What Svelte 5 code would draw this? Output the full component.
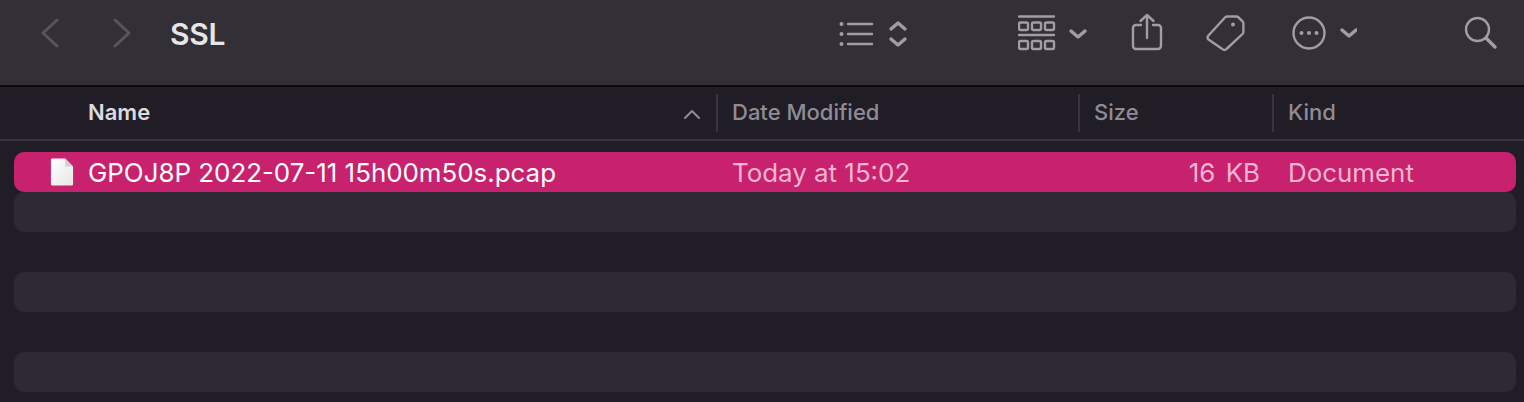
<script>
  const cols = [
    { label: 'Date Modified', cls: 'date' },
    { label: 'Size', cls: 'size' },
    { label: 'Kind', cls: 'kind' }
  ];
  const stripes = [1, 2, 3, 4, 5];
</script>

<div class="window">
  <header class="toolbar">
    <div class="nav">
      <svg width="22" height="30" viewBox="0 0 22 30"><path d="M18 2 4 15l14 13" /></svg>
      <svg width="22" height="30" viewBox="0 0 22 30"><path d="M4 2l14 13L4 28" /></svg>
    </div>
    <h1>SSL</h1>
    <div class="tools">
      <svg class="t-list" width="70" height="30" viewBox="0 0 70 30">
        <circle cx="2.500" cy="5" r="2" class="fill" /><circle cx="2.500" cy="15" r="2" class="fill" /><circle cx="2.500" cy="25" r="2" class="fill" />
        <path d="M9 5h24M9 15h24M9 25h24" />
        <path d="M52 10l7-6 7 6M52 20l7 6 7-6" class="bold" />
      </svg>
      <svg class="t-group" width="72" height="36" viewBox="0 0 72 36">
        <path d="M1 1.500h35M1 20h35" />
        <rect x="1" y="7.500" width="9" height="7.500" rx="1.500" /><rect x="14" y="7.500" width="9" height="7.500" rx="1.500" /><rect x="27" y="7.500" width="9" height="7.500" rx="1.500" />
        <rect x="1" y="26" width="9" height="8" rx="1.500" /><rect x="14" y="26" width="9" height="8" rx="1.500" /><rect x="27" y="26" width="9" height="8" rx="1.500" />
        <path d="M53 16l7 6 7-6" class="bold" />
      </svg>
      <svg class="t-share" width="32" height="38" viewBox="0 0 32 38">
        <path d="M10 12H5a3 3 0 0 0-3 3v18a3 3 0 0 0 3 3h22a3 3 0 0 0 3-3V15a3 3 0 0 0-3-3h-5" />
        <path d="M16 25V2M9.500 8 16 2l6.500 6" />
      </svg>
      <svg class="t-tag" width="40" height="38" viewBox="0 0 40 38">
        <path d="M2.500 21.500 19 3.500a3 3 0 0 1 2-1h9.500a3 3 0 0 1 2 .8l4 4a3 3 0 0 1 .9 2.200v8.500a3 3 0 0 1-.9 2L20.500 35a3 3 0 0 1-4.200 0L2.500 25.600a3 3 0 0 1 0-4.100z" />
        <circle cx="27" cy="10.500" r="2" class="fill" />
      </svg>
      <svg class="t-more" width="66" height="36" viewBox="0 0 66 36">
        <circle cx="18" cy="18" r="15.500" />
        <circle cx="10.500" cy="18" r="2" class="fill" /><circle cx="18" cy="18" r="2" class="fill" /><circle cx="25.500" cy="18" r="2" class="fill" />
        <path d="M51 15l7 6 7-6" class="bold" />
      </svg>
      <svg class="t-search" width="34" height="34" viewBox="0 0 34 34">
        <circle cx="13.500" cy="13.500" r="11.500" />
        <path d="M22 22l9 9" class="bold" />
      </svg>
    </div>
  </header>

  <div class="head">
    <div class="h-name">
      <span>Name</span>
      <svg width="16" height="10" viewBox="0 0 16 10"><path d="M1 9l7-7 7 7" /></svg>
    </div>
    {#each cols as col}
      <div class="h-col {col.cls}">{col.label}</div>
    {/each}
  </div>

  <main class="rows">
    <div class="row selected">
      <svg class="doc" width="24" height="28" viewBox="0 0 26 30" preserveAspectRatio="none">
        <defs><linearGradient id="paper" x1="0" y1="0" x2="1" y2="1"><stop offset="0" stop-color="#ffffff" /><stop offset="1" stop-color="#e6e6e6" /></linearGradient></defs>
        <path class="sheet" d="M2 0.500h14.500L25 9v19a1.500 1.500 0 0 1-1.500 1.500h-21A1.500 1.500 0 0 1 1 28V2A1.500 1.500 0 0 1 2 .5z" />
        <path class="fold" d="M16.500 .5V8a1 1 0 0 0 1 1H25z" />
      </svg>
      <span class="c-name">GPOJ8P 2022-07-11 15h00m50s.pcap</span>
      <span class="c-date">Today at 15:02</span>
      <span class="c-size">16 KB</span>
      <span class="c-kind">Document</span>
    </div>
    {#each stripes as s}
      <div class="row" class:band={s % 2 === 1}></div>
    {/each}
  </main>
</div>

<style>
  :global(body) { margin: 0; background: #211d27; }
  .window {
    width: 1524px;
    height: 402px;
    overflow: hidden;
    background: #211d27;
    font-family: Inter, "Liberation Sans", sans-serif;
  }
  svg path, svg rect, svg circle { fill: none; stroke: #a09da3; stroke-width: 2.400; stroke-linecap: round; stroke-linejoin: round; }
  svg .fill { fill: #a09da3; stroke: none; }
  svg .bold { stroke-width: 3.400; }

  .toolbar {
    box-sizing: border-box;
    height: 87px;
    display: flex;
    align-items: flex-start;
    background: #332f36;
    border-bottom: 2px solid #0c0b0e;
    position: relative;
  }
  .nav { display: flex; gap: 50px; padding: 18px 0 0 39px; }
  .nav path { stroke: #58555c; stroke-width: 3; }
  h1 {
    margin: 0 0 0 37px;
    padding-top: 17px;
    font-size: 30px;
    line-height: 34px;
    font-weight: 600;
    letter-spacing: -0.2px;
    color: #e6e5e7;
  }
  .tools { position: relative; flex: 1; height: 86px; }
  .tools svg { position: absolute; }
  .t-list { left: 614px; top: 19px; }
  .t-group { left: 793px; top: 15px; }
  .t-share { left: 906px; top: 13px; }
  .t-tag { left: 981px; top: 14px; }
  .t-more { left: 1066px; top: 15px; }
  .t-search { left: 1239px; top: 16px; }

  .head {
    box-sizing: border-box;
    height: 54px;
    display: flex;
    align-items: center;
    border-bottom: 2px solid #38343d;
    font-size: 22px;
    font-weight: 500;
    color: #8f8c93;
  }
  .h-name {
    box-sizing: border-box;
    width: 716px;
    padding: 0 16px 2px 88px;
    display: flex;
    justify-content: space-between;
    align-items: center;
    font-weight: 600;
    color: #dcdbde;
  }
  .h-name svg { margin-top: 3px; }
  .h-name path { stroke: #8f8c93; stroke-width: 2; }
  .h-col {
    box-sizing: border-box;
    height: 38px;
    line-height: 36px;
    padding-left: 14px;
    border-left: 2px solid #38343d;
  }
  .date { width: 362px; }
  .size { width: 194px; }
  .kind { flex: 1; }

  .rows { padding: 11px 8px 0 14px; }
  .row {
    height: 40px;
    border-radius: 10px;
    display: flex;
    align-items: center;
    font-size: 25.900px;
    position: relative;
  }
  .band { background: #2e2a33; }
  .selected { background: #c8216d; color: #f3b6d2; }
  .doc { position: absolute; left: 36px; top: 6px; }
  svg .sheet { fill: url(#paper); stroke: none; }
  svg .fold { fill: #cfcfcf; stroke: none; }
  .c-name { position: absolute; left: 74px; color: #ffffff; white-space: nowrap; }
  .c-date { position: absolute; left: 718px; white-space: nowrap; }
  .c-size { position: absolute; right: 256px; white-space: nowrap; word-spacing: 3px; }
  .c-kind { position: absolute; left: 1274px; white-space: nowrap; }
</style>
